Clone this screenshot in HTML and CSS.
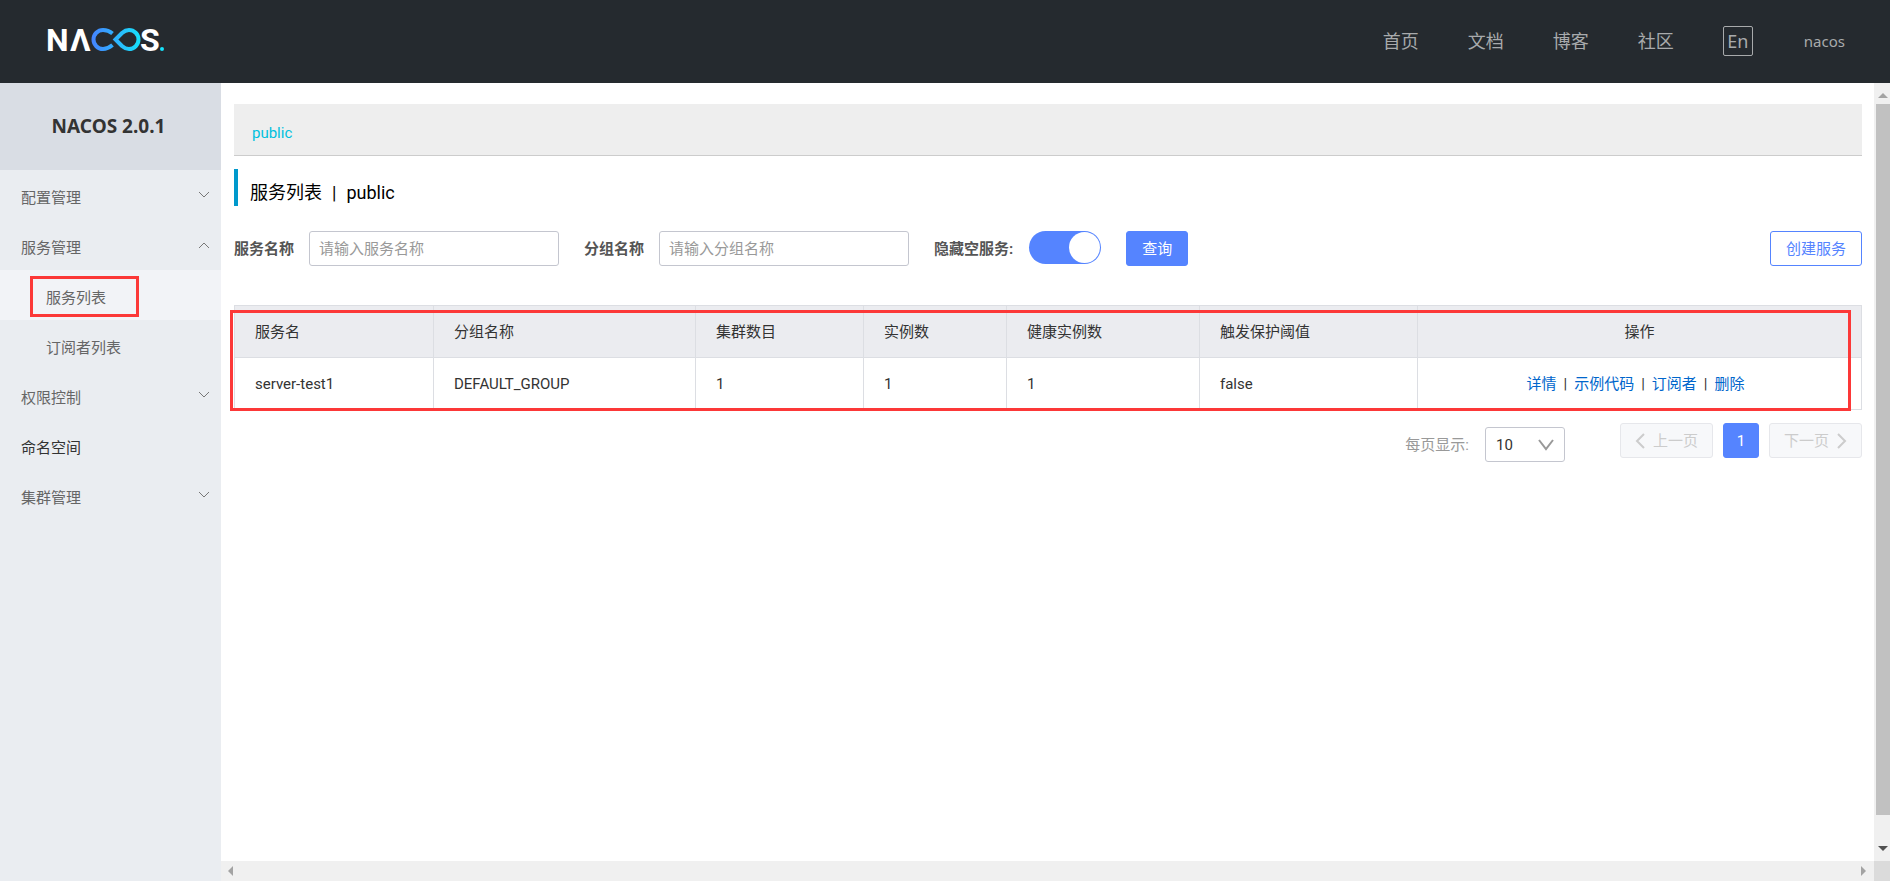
FILE: index.html
```html
<!DOCTYPE html>
<html lang="zh-CN">
<head>
<meta charset="utf-8">
<title>Nacos</title>
<link rel="stylesheet" href="styles.css">
</head>
<body>
<header class="header">
  <a class="logo" href="#" aria-label="Nacos">
    <svg width="124" height="44" viewBox="-4 0 124 44">
      <defs>
        <linearGradient id="loop" gradientUnits="userSpaceOnUse" x1="44" y1="0" x2="92" y2="0">
          <stop offset="0" stop-color="#4584ff"/>
          <stop offset="1" stop-color="#16e2fb"/>
        </linearGradient>
      </defs>
      <text class="logo-text" x="-2" y="32">N</text>
      <text class="logo-text" x="22" y="32">Λ</text>
      <text class="logo-text" x="92" y="32">S</text>
      <g fill="none" stroke="url(#loop)" stroke-width="4" transform="translate(0 6)">
        <path d="M64.500 8.500 C61.500 6 58.500 5 55 5 A9.500 9.500 0 0 0 55 24 C58.500 24 61.500 22.500 64.500 20"/>
        <path d="M67.500 14.500 L74 8 C76.500 5.800 78.500 5 81 5 A9.500 9.500 0 0 1 81 24 C78.500 24 76.500 23.200 74 21 Z"/>
      </g>
      <circle cx="114" cy="30" r="2" fill="#16e2fb"/>
    </svg>
  </a>
  <nav class="nav">
    <a href="#">首页</a>
    <a href="#">文档</a>
    <a href="#">博客</a>
    <a href="#">社区</a>
    <button class="lang" type="button">En</button>
    <a class="user" href="#">nacos</a>
  </nav>
</header>
<div class="body">
  <aside class="sidebar">
    <h1 class="version">NACOS 2.0.1</h1>
    <ul class="menu">
      <li><a class="item" href="#">配置管理<svg class="chev" viewBox="0 0 12 8"><path d="M1 1l5 5 5-5"/></svg></a></li>
      <li><a class="item" href="#">服务管理<svg class="chev" viewBox="0 0 12 8"><path d="M1 7l5-5 5 5"/></svg></a></li>
      <li class="marked"><a class="item sub active" href="#">服务列表</a></li>
      <li><a class="item sub" href="#">订阅者列表</a></li>
      <li><a class="item" href="#">权限控制<svg class="chev" viewBox="0 0 12 8"><path d="M1 1l5 5 5-5"/></svg></a></li>
      <li><a class="item leaf" href="#">命名空间</a></li>
      <li><a class="item" href="#">集群管理<svg class="chev" viewBox="0 0 12 8"><path d="M1 1l5 5 5-5"/></svg></a></li>
    </ul>
  </aside>
  <div class="pane">
    <main class="main">
      <div class="namespace"><a href="#">public</a></div>
      <h2 class="title"><span>服务列表</span><span>|</span><span>public</span></h2>
      <form class="filters">
        <label for="svc">服务名称</label>
        <input class="text" id="svc" type="text" placeholder="请输入服务名称">
        <label for="grp">分组名称</label>
        <input class="text" id="grp" type="text" placeholder="请输入分组名称">
        <label for="hide">隐藏空服务:</label>
        <input class="switch" id="hide" type="checkbox" checked>
        <button class="btn primary" type="button">查询</button>
        <button class="btn outline" type="button">创建服务</button>
      </form>
      <div class="table-wrap">
        <table class="table">
          <colgroup><col class="c1"><col class="c2"><col class="c3"><col class="c4"><col class="c5"><col class="c6"><col></colgroup>
          <thead>
            <tr><th>服务名</th><th>分组名称</th><th>集群数目</th><th>实例数</th><th>健康实例数</th><th>触发保护阈值</th><th class="ops">操作</th></tr>
          </thead>
          <tbody>
            <tr><td>server-test1</td><td>DEFAULT_GROUP</td><td>1</td><td>1</td><td>1</td><td>false</td>
              <td class="ops"><div class="links"><a href="#">详情</a><span>|</span><a href="#">示例代码</a><span>|</span><a href="#">订阅者</a><span>|</span><a href="#">删除</a></div></td></tr>
          </tbody>
        </table>
      </div>
      <div class="pager">
        <label for="size">每页显示:</label>
        <div class="select">
          <select id="size"><option>10</option></select>
          <svg viewBox="0 0 16 12"><path d="M1 1l7 9 7-9"/></svg>
        </div>
        <div class="pages">
          <button class="btn page" type="button" disabled><svg viewBox="0 0 10 16"><path d="M9 1L2 8l7 7"/></svg>上一页</button>
          <button class="btn primary current" type="button">1</button>
          <button class="btn page" type="button" disabled>下一页<svg viewBox="0 0 10 16"><path d="M1 1l7 7-7 7"/></svg></button>
        </div>
      </div>
    </main>
    <div class="vbar"><svg viewBox="0 0 10 6"><path fill="#a3a3a3" d="M0 6l5-5 5 5z"/></svg><div class="thumb"></div><svg viewBox="0 0 10 6"><path fill="#505050" d="M0 0h10L5 5z"/></svg></div>
    <div class="hbar"><svg viewBox="0 0 6 10"><path fill="#a3a3a3" d="M5 0v10L0 5z"/></svg><svg viewBox="0 0 6 10"><path fill="#a3a3a3" d="M0 0v10l5-5z"/></svg></div>
    <div class="corner"></div>
  </div>
</div>
</body>
</html>
```
FILE: styles.css
```css
* { box-sizing: border-box; }
body {
  margin: 0;
  min-height: 100vh;
  display: flex;
  flex-direction: column;
  font: 15px/20px "Noto Sans", "Noto Sans CJK SC", sans-serif;
  color: #333;
  background: #fff;
}
a { color: inherit; text-decoration: none; }
button, input, select { font: inherit; }
svg { flex: none; }

.header {
  height: 83px;
  padding: 0 45px 2px 44px;
  display: flex;
  align-items: center;
  justify-content: space-between;
  background: #252a2f;
}
.logo { display: flex; }
.logo-text { font: 700 32px Roboto, sans-serif; fill: #fff; }
.nav {
  display: flex;
  align-items: center;
  gap: 49px;
  font-size: 18px;
  color: #a8aaac;
}
.lang {
  width: 30px;
  height: 30px;
  padding: 0;
  border: 1px solid #a8aaac;
  border-radius: 2px;
  background: none;
  color: #a8aaac;
  line-height: 26px;
}
.user { margin-left: 2px; font-size: 15px; }

.body { flex: 1; display: flex; }
.sidebar { width: 221px; flex: none; background: #eaedf1; }
.version {
  margin: 0;
  height: 87px;
  padding-right: 4px;
  background: #d9dde4;
  font-size: 19px;
  line-height: 87px;
  text-align: center;
}
.menu { margin: 0; padding: 0; list-style: none; }
.item {
  height: 50px;
  padding: 4px 11px 0 21px;
  display: flex;
  align-items: center;
  justify-content: space-between;
  color: #666;
}
.sub { padding-left: 46px; }
.active { background: #f2f3f7; }
.leaf { color: #333; }
.chev { width: 12px; height: 8px; margin-bottom: 4px; fill: none; stroke: #777; }
.marked { position: relative; }
.marked::after {
  content: "";
  position: absolute;
  inset: 6px 82px 3px 30px;
  border: 3px solid #fc3838;
}

.pane {
  flex: 1;
  min-width: 0;
  display: grid;
  grid-template-columns: minmax(0, 1fr) 16px;
  grid-template-rows: 1fr 20px;
  font-family: Roboto, "Noto Sans CJK SC", sans-serif;
}
.main { padding: 21px 12px 0 13px; }
.namespace {
  height: 52px;
  padding: 0 18px;
  border-bottom: 1px solid #ccc;
  background: #eee;
  color: #00c1de;
  line-height: 58px;
}
.title {
  margin: 13px 0 25px;
  height: 37px;
  padding: 11px 0 0 12px;
  border-left: 4px solid #09c;
  display: flex;
  gap: 10px;
  color: #000;
  font-size: 18px;
  font-weight: 400;
  line-height: 26px;
}
.filters { display: flex; align-items: center; }
.filters label { color: #555; font-weight: 700; }
.text {
  width: 250px;
  height: 35px;
  margin: 0 25px 0 15px;
  padding: 0 9px;
  border: 1px solid #c4c6cf;
  border-radius: 3px;
}
.text::placeholder { color: #999; }
.switch {
  appearance: none;
  width: 72px;
  height: 33px;
  margin: 0 25px 2px 16px;
  padding: 1px;
  border-radius: 17px;
  background: #5584ff;
  display: flex;
  justify-content: flex-end;
}
.switch::before {
  content: "";
  width: 31px;
  height: 31px;
  border-radius: 50%;
  background: #fff;
}
.btn {
  height: 35px;
  padding: 0 15px;
  border: 1px solid #5584ff;
  border-radius: 3px;
  background: #fff;
  display: flex;
  align-items: center;
  justify-content: center;
  white-space: nowrap;
}
.primary { background: #5584ff; color: #fff; }
.outline { margin-left: auto; color: #5584ff; }

.table-wrap { position: relative; margin-top: 39px; }
.table-wrap::after {
  content: "";
  position: absolute;
  inset: 5px 11px -1px -4px;
  border: 3px solid #fc3838;
  pointer-events: none;
}
.table { width: 100%; border-collapse: collapse; table-layout: fixed; }
.c1 { width: 199px; }
.c2 { width: 262px; }
.c3 { width: 168px; }
.c4 { width: 143px; }
.c5 { width: 193px; }
.c6 { width: 218px; }
.table th, .table td {
  height: 52px;
  padding: 0 20px;
  border: 1px solid #dcdee3;
  text-align: left;
  font-weight: 400;
}
.table th { background: #ebecf0; }
.table .ops { text-align: center; }
.links { display: flex; justify-content: center; gap: 7px; padding-right: 8px; }
.links a { color: #06c; }

.pager { margin-top: 13px; display: flex; justify-content: flex-end; }
.pager label { padding-top: 12px; color: #999; }
.select { position: relative; margin: 4px 55px 0 16px; }
.select select {
  appearance: none;
  width: 80px;
  height: 35px;
  padding: 0 10px;
  border: 1px solid #c4c6cf;
  border-radius: 3px;
  background: #fff;
  color: #333;
}
.select svg {
  position: absolute;
  right: 11px;
  top: 12px;
  width: 16px;
  height: 12px;
  fill: none;
  stroke: #999;
  stroke-width: 2;
  pointer-events: none;
}
.pages { display: flex; gap: 10px; }
.page {
  padding: 0 14px;
  gap: 8px;
  border-color: #e6e7eb;
  background: #f7f8fa;
  color: #ccc;
}
.page svg { width: 10px; height: 16px; fill: none; stroke: #ccc; stroke-width: 2; }
.current { width: 36px; }

.vbar {
  padding: 9px 0 9px 2px;
  background: #f0f0f0;
  display: flex;
  flex-direction: column;
  align-items: center;
}
.vbar svg { width: 10px; height: 6px; }
.thumb { flex: 1; align-self: stretch; margin: 6px 0 31px; background: #c1c1c1; }
.hbar {
  padding: 0 7px;
  background: #f0f0f0;
  display: flex;
  align-items: center;
  justify-content: space-between;
}
.hbar svg { width: 6px; height: 10px; }
.corner { background: #dbdbdb; }
```
